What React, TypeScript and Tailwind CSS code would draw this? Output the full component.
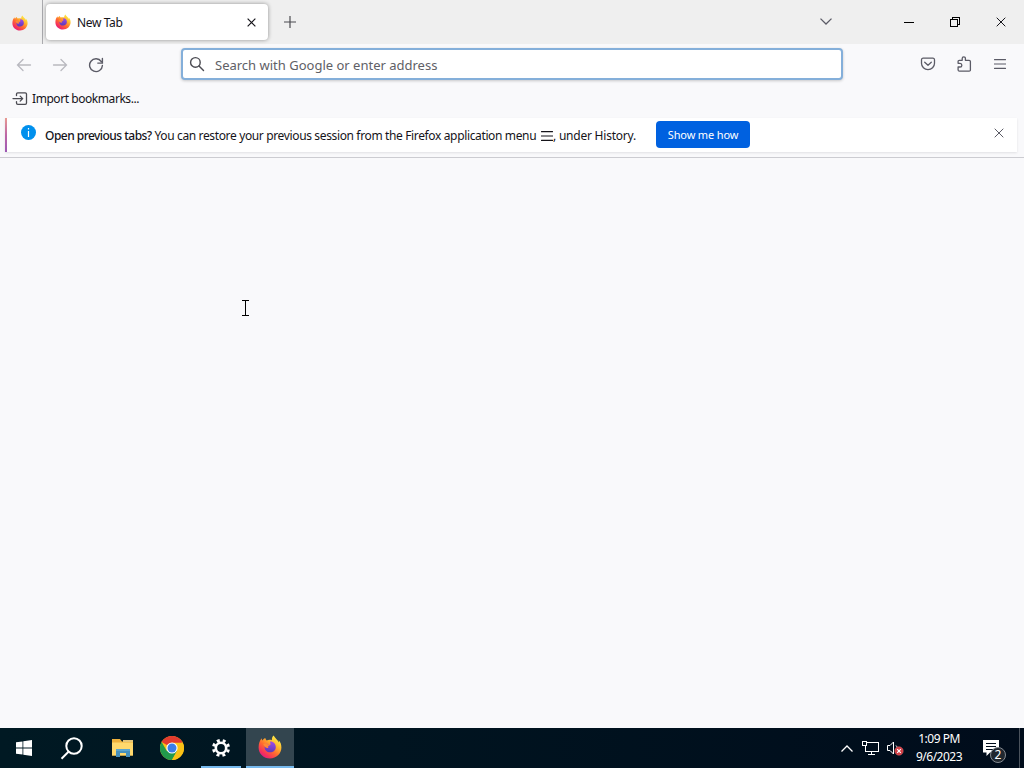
import React, { useId } from 'react';

interface IconProps {
    className?: string;
}

const FirefoxLogo: React.FC<IconProps> = ({ className = 'size-4' }) => {
    const id = useId();

    return (
        <svg viewBox="0 0 24 24" className={`block shrink-0 ${className}`}>
            <defs>
                <linearGradient id={`${id}-flame`} x1="0.85" y1="0.1" x2="0.2" y2="0.95">
                    <stop offset="0" stopColor="#fff04a" />
                    <stop offset="0.3" stopColor="#ffb52c" />
                    <stop offset="0.58" stopColor="#ff6a30" />
                    <stop offset="0.85" stopColor="#f5305c" />
                    <stop offset="1" stopColor="#dd1f82" />
                </linearGradient>
                <linearGradient id={`${id}-globe`} x1="0.5" y1="0" x2="0.4" y2="1">
                    <stop offset="0" stopColor="#a04be8" />
                    <stop offset="1" stopColor="#5b39b8" />
                </linearGradient>
            </defs>
            <path
                d="M15.6.6c-1.500 1.400-1.900 3.100-1.700 4.600-1.700-.5-3.600-.5-5.200.2C7.900 4.800 7.400 4 7.200 3c-1.200.6-2.200 1.500-2.800 2.500-.5-.5-.7-1.300-.6-2.200C1.700 5.200.6 8.800.6 12.400.6 18.700 5.700 23.400 12 23.400S23.400 18.600 23.400 12.500c0-3.300-1-5.600-2.700-7.300.2 1 .2 1.700.1 2.400C19.600 4.600 17 3.400 15.600.6Z"
                fill={`url(#${id}-flame)`}
            />
            <path
                d="M12.100 6.400c3.600-.1 5.700 2.500 5.700 5.500 0 3.200-2.500 5.400-5.700 5.400-3.300 0-5.500-2.300-5.500-5.100 0-1.400.5-2.500 1.300-3.300 1.100-.2 2.100 0 2.900.5.5-.3 1.100-.4 1.700-.4-.2-1-.5-1.800-.4-2.600Z"
                fill={`url(#${id}-globe)`}
            />
            <path
                d="M5.200 9.300c1.700-1 3.500-.9 4.900.1.800-.4 1.700-.5 2.700-.3-.5 1.300-1.800 1.500-2.600 2.200-.3.700-.2 1.100.4 1.500-1.900.8-4.300-.8-5.400-3.500Z"
                fill="#ff8a34"
            />
        </svg>
    );
};

const ChromeLogo: React.FC = () => (
    <svg viewBox="0 0 24 24" className="block size-6">
        <circle cx="12" cy="12" r="12" fill="#fbc116" />
        <path d="M12 12 L1.600 6 A12 12 0 0 1 22.400 6Z" fill="#e33b2e" />
        <path d="M1.600 6A12 12 0 0 0 12 24L17.200 15 12 12 6.800 15Z" fill="#229a4c" />
        <path d="M12 6.500H22.700A12 12 0 0 1 12 24L17 14.800Z" fill="#fbc116" />
        <path d="M12 6.500H22.700L22.400 6 12 5Z" fill="#e33b2e" />
        <circle cx="12" cy="12" r="5.600" fill="#fff" />
        <circle cx="12" cy="12" r="4.500" fill="#3b7de8" />
    </svg>
);

const CloseIcon: React.FC<IconProps> = ({ className = 'size-2.5' }) => (
    <svg viewBox="0 0 10 10" className={`block ${className}`} fill="none" stroke="currentColor">
        <path d="M.7.7l8.600 8.600M9.300.7L.7 9.300" />
    </svg>
);

const MenuIcon: React.FC<IconProps> = ({ className = '' }) => (
    <svg viewBox="0 0 12 10" className={`h-2.5 w-3 ${className}`} fill="none" stroke="currentColor" strokeWidth="1.200" strokeLinecap="round">
        <path d="M.5.600h11M.5 5h11M.5 9.400h11" />
    </svg>
);

const TabStrip: React.FC = () => (
    <div className="flex h-11 shrink-0 bg-[#efefef]">
        <div className="flex w-[43px] items-center border-r border-[#aaaaae] pl-3 pt-0.5">
            <FirefoxLogo />
        </div>
        <div className="ml-[3px] mt-1 flex h-9 w-[222px] items-center rounded bg-white pl-[9px] pr-3 shadow-[0_0_4px_rgba(0,0,0,0.4)]">
            <FirefoxLogo />
            <span className="ml-1.5 flex-1 pt-0.5 text-[12px] tracking-[-0.36px]">New Tab</span>
            <CloseIcon className="size-[9px] stroke-[1.3]" />
        </div>
        <div className="flex w-[43px] items-center justify-center text-[#4b4b50]">
            <svg viewBox="0 0 12 12" className="size-3" fill="none" stroke="currentColor" strokeWidth="1.200">
                <path d="M6 0v12M0 6h12" />
            </svg>
        </div>
        <div className="ml-auto flex h-[43px] items-center">
            <svg viewBox="0 0 12 7" className="mr-[72px] h-[7px] w-3" fill="none" stroke="#5b5b66" strokeWidth="1.300">
                <path d="M.5.600L6 6l5.500-5.400" />
            </svg>
            <svg viewBox="0 0 10 10" className="mr-9 size-2.5" stroke="#000" shapeRendering="crispEdges">
                <path d="M0 5.500h10" />
            </svg>
            <svg viewBox="0 0 10 10" className="mr-9 size-2.5" fill="none" stroke="#000" shapeRendering="crispEdges">
                <path d="M.5 2.500h7v7h-7zM2.500 2.500v-2h7v7h-2" />
            </svg>
            <CloseIcon className="mr-[18px] size-2.5" />
        </div>
    </div>
);

const NavBar: React.FC = () => (
    <div className="flex h-10 shrink-0 items-center text-[#5b5b66]">
        <div className="flex w-[181px] gap-5 pl-4 pt-0.5">
            <svg viewBox="0 0 16 16" className="size-4 text-[#b9b9bf]" fill="none" stroke="currentColor" strokeWidth="1.300" strokeLinecap="round">
                <path d="M1.500 8h13M7 2.500L1.500 8 7 13.500" />
            </svg>
            <svg viewBox="0 0 16 16" className="size-4 text-[#b9b9bf]" fill="none" stroke="currentColor" strokeWidth="1.300" strokeLinecap="round">
                <path d="M1.500 8h13M9 2.500L14.500 8 9 13.500" />
            </svg>
            <svg viewBox="0 0 16 16" className="size-4" fill="none" stroke="currentColor" strokeWidth="1.400" strokeLinecap="round">
                <path d="M13.300 4.600A6.400 6.400 0 1 0 14.400 8.500M14.400 1.500v4.600H9.800" />
            </svg>
        </div>
        <div className="flex h-8 w-[662px] items-center rounded border-2 border-[#84afda] bg-white pl-1.5 shadow-[0_1px_3px_rgba(0,0,0,0.2)]">
            <svg viewBox="0 0 16 16" className="size-4 text-[#4b4b52]" fill="none" stroke="currentColor" strokeWidth="1.400" strokeLinecap="round">
                <circle cx="6.400" cy="6.400" r="4.800" />
                <path d="M10 10L14.500 14.500" />
            </svg>
            <span className="ml-2.5 mt-[3px] text-[13px] text-[#606066]">
                Search with Google or enter address
            </span>
        </div>
        <div className="ml-auto flex items-center gap-5 pr-4">
            <svg viewBox="0 0 16 16" className="size-4" fill="none" stroke="currentColor" strokeWidth="1.300" strokeLinecap="round" strokeLinejoin="round">
                <path d="M3 2.100h10A1.700 1.700 0 0 1 14.500 3.800V7.200a6.500 6.500 0 0 1-13 0V3.800A1.700 1.700 0 0 1 3 2.100ZM4.700 6.300L8 9.300l3.300-3" />
            </svg>
            <svg viewBox="0 0 16 16" className="size-4" fill="none" stroke="currentColor" strokeWidth="1.300" strokeLinejoin="round">
                <path d="M2.100 7.300V5.500A1.200 1.200 0 0 1 3.300 4.300H6.200V2.400a1.600 1.600 0 0 1 3.200 0v1.900H13.100a1.300 1.300 0 0 1 1.300 1.300V14A1.200 1.200 0 0 1 13.100 15.200H3.400A1.300 1.300 0 0 1 2.100 14V11H4a1.800 1.800 0 0 0 0-3.700Z" />
            </svg>
            <div className="flex w-4 justify-center">
                <MenuIcon />
            </div>
        </div>
    </div>
);

const BookmarksBar: React.FC = () => (
    <div className="flex h-8 shrink-0 items-center pb-[3px] pl-3">
        <svg viewBox="0 0 16 16" className="size-4 text-[#4b4b52]" fill="none" stroke="currentColor" strokeWidth="1.300" strokeLinecap="round" strokeLinejoin="round">
            <path d="M4.500 4.600V3.100A1.300 1.300 0 0 1 5.800 1.800h7.400a1.300 1.300 0 0 1 1.300 1.300v9a1.300 1.300 0 0 1-1.300 1.300H5.800a1.300 1.300 0 0 1-1.300-1.300V10.600M1 7.600h9.700M8.200 5.100l2.500 2.500-2.500 2.500" />
        </svg>
        <span className="ml-1 pt-px text-[12px] tracking-[-0.44px]">Import bookmarks...</span>
    </div>
);

const RestoreBar: React.FC = () => (
    <div className="flex h-[42px] shrink-0 border-b border-[#ccccd1] pl-[5px] pr-[7px] pt-[2px]">
        <div className="flex h-[34px] flex-1 bg-white shadow-[0_1px_2px_rgba(58,57,68,0.12)]">
            <div className="w-0.5 bg-linear-to-b from-[#e89a91] via-[#bd65a5] to-[#9c58b4]" />
            <div className="ml-3.5 mt-[7px] flex size-[15px] items-center justify-center rounded-full bg-[#0090ed]">
                <svg viewBox="0 0 3 9" className="h-[9px] w-[3px]" fill="#fff">
                    <path d="M.9 0h1.200v1.500H.9zM.9 3h1.200v6H.9z" />
                </svg>
            </div>
            <div className="ml-[9px] flex h-9 items-center whitespace-pre text-[12px]">
                <span className="font-medium tracking-[-0.53px]">Open previous tabs?</span>
                <span className="tracking-[-0.36px]"> You can restore your previous session from the Firefox application menu </span>
                <MenuIcon className="ml-0.5" />
                <span className="tracking-[-0.22px]">, under History.</span>
            </div>
            <button className="ml-5 mt-[3px] h-[27px] w-[94px] rounded bg-[#0061e0] pt-0.5 text-[11px] tracking-[-0.15px] text-white">
                Show me how
            </button>
            <CloseIcon className="ml-auto mr-[13px] mt-2.5 size-2.5 text-[#5b5b66]" />
        </div>
    </div>
);

const Taskbar: React.FC = () => (
    <div className="flex h-10 shrink-0 bg-linear-to-r from-[#001923] to-[#000c1b] text-white">
        <div className="flex w-12 items-center justify-center">
            <svg viewBox="0 0 16 16" className="size-4" fill="#fff">
                <path d="M0 2.300L6.500 1.400v6.200H0zM7.300 1.300L16 0v7.600H7.300zM0 8.400h6.500v6.200L0 13.700zM7.300 8.400H16V16L7.300 14.700z" />
            </svg>
        </div>
        <div className="flex w-12 items-center justify-center">
            <svg viewBox="0 0 24 24" className="size-6" fill="none" stroke="#fff" strokeWidth="2">
                <circle cx="14" cy="10" r="7.700" />
                <path d="M8.500 15.700L1.500 22.700" />
            </svg>
        </div>
        <div className="flex w-[54px] items-center justify-center">
            <svg viewBox="0 0 22 20" className="h-5 w-[22px]">
                <path d="M0 1h8l2 2.500h11V17.500H0z" fill="#eeb13c" />
                <path d="M0 4.500h21v13H0z" fill="#ffd96d" />
                <path d="M11 2h10v2H11z" fill="#e5c678" />
                <path d="M4 11h14v8h-4v-4H8v4H4z" fill="#4590bd" />
                <path d="M4 11h14v2H4z" fill="#5ba5ce" />
            </svg>
        </div>
        <div className="flex w-11 items-center justify-center">
            <ChromeLogo />
        </div>
        <div className="ml-[7px] flex h-10 w-10 items-center justify-center border-b-2 border-[#76b9ed] pt-0.5">
            <svg viewBox="0 0 20 20" className="size-5" fill="none" stroke="#fff">
                <circle cx="10" cy="10" r="5.200" strokeWidth="2.600" />
                <circle cx="10" cy="10" r="7.500" strokeWidth="3" strokeDasharray="2.900 2.990" strokeDashoffset="4.400" />
            </svg>
        </div>
        <div className="ml-[5px] flex h-10 w-12 items-center justify-center border-b-2 border-[#76b9ed] bg-[#33454f]">
            <FirefoxLogo className="size-6" />
        </div>
        <div className="ml-auto flex items-center">
            <svg viewBox="0 0 12 7" className="mr-[9px] h-[7px] w-3" fill="none" stroke="#fff" strokeWidth="1.300">
                <path d="M.5 6.500L6 1l5.500 5.500" />
            </svg>
            <svg viewBox="0 0 17 14" className="mr-2 h-3.5 w-[17px]" fill="none" stroke="#fff" shapeRendering="crispEdges">
                <path d="M5 1.500h11.500v9H3.500V5M.5.500h4v4h-4zM9.500 10.500v3M6 13.500h7" />
            </svg>
            <svg viewBox="0 0 17 16" className="mr-2.5 h-4 w-[17px]" fill="none" stroke="#fff">
                <path d="M.5 5.500H3L6.500 2v12L3 10.500H.5z" />
                <path d="M9 5.500q1 1 1 2" />
                <circle cx="12" cy="11" r="4.200" fill="#d13c43" stroke="#e06a6e" strokeWidth=".5" />
                <path d="M10.200 9.200l3.600 3.600M13.800 9.200l-3.600 3.600" strokeWidth="1.200" />
            </svg>
            <div className="w-[50px] whitespace-nowrap text-center text-[12px] leading-[18px] tracking-[-0.5px]">
                <div>1:09 PM</div>
                <div>9/6/2023</div>
            </div>
            <div className="relative ml-[19px] mr-5 size-4">
                <svg viewBox="0 0 16 16" className="size-4">
                    <path d="M0 0h16v12.500H7L3.500 16v-3.500H0z" fill="#fff" />
                    <path d="M3 3.500h10M3 6.500h10M3 9.500h7" stroke="#000d1c" />
                </svg>
                <span className="absolute left-[7px] top-[7px] flex size-4 items-center justify-center rounded-full border border-[#858b92] bg-[#20272f] text-[12px] leading-none">
                    2
                </span>
            </div>
        </div>
        <div className="w-[5px] border-l border-[#4a525c]" />
    </div>
);

const TextCursor: React.FC = () => (
    <svg viewBox="0 0 7 16" className="absolute left-[242px] top-[300px] h-4 w-[7px]" fill="none" stroke="#000" shapeRendering="crispEdges">
        <path d="M0 .5h7M3.500 0v16M0 15.500h7" />
    </svg>
);

export default function App() {
    return (
        <div className="relative flex h-[768px] w-[1024px] flex-col overflow-hidden bg-[#f9f9fb] font-['Noto_Sans',sans-serif] text-[#15141a]">
            <TabStrip />
            <NavBar />
            <BookmarksBar />
            <RestoreBar />
            <main className="flex-1 bg-[#f9f9fb]" />
            <Taskbar />
            <TextCursor />
        </div>
    );
}
